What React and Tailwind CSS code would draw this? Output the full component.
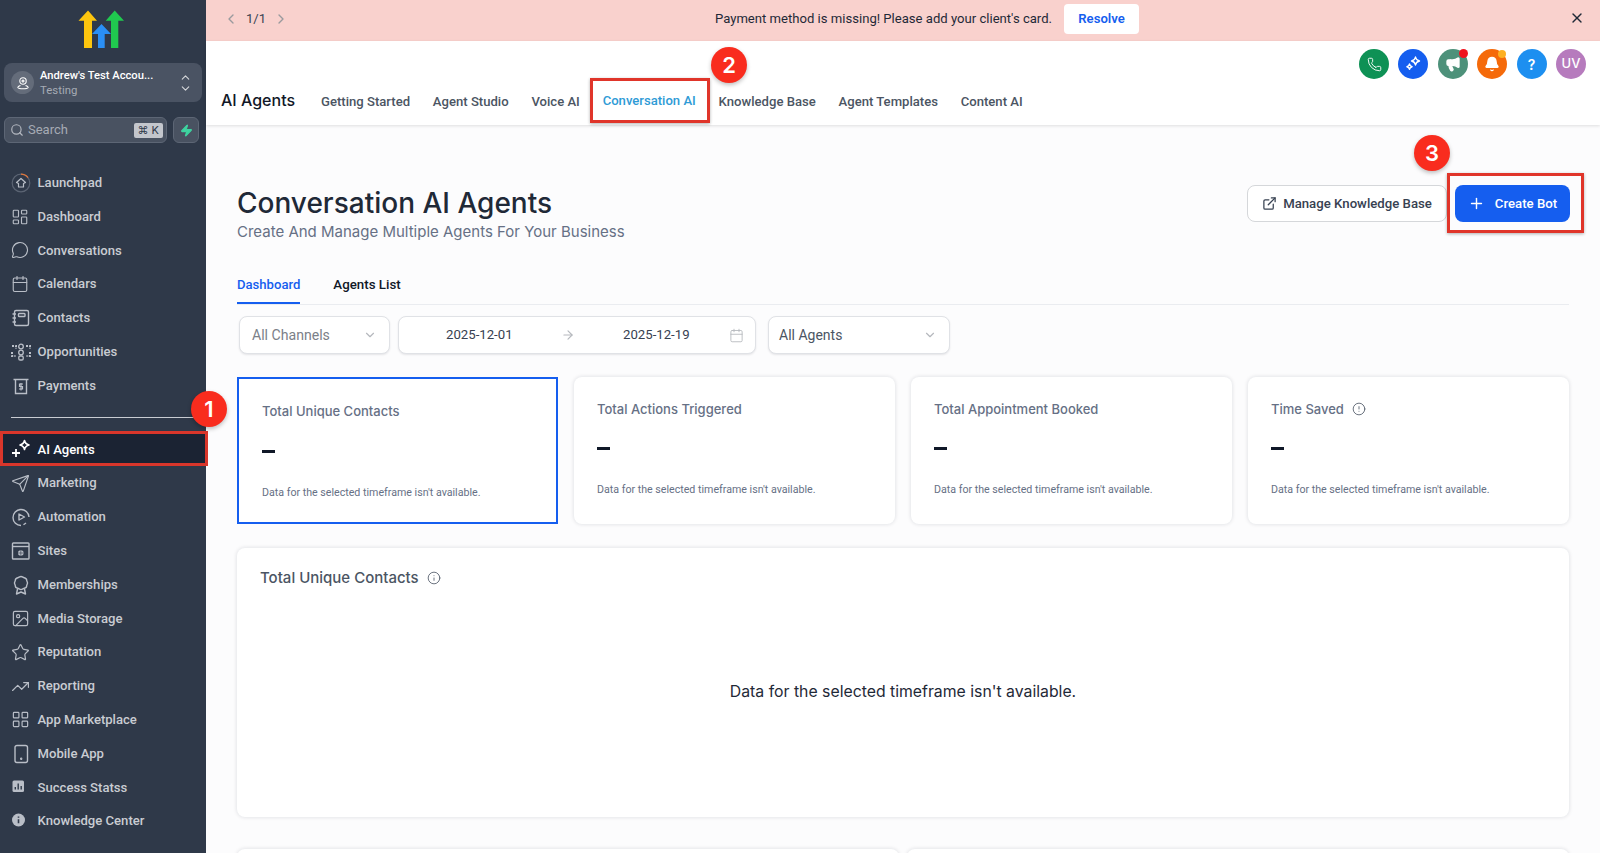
import React from "react";
import {
  Search, Zap, ChevronUp, ChevronDown, ChevronLeft, ChevronRight, X, LayoutDashboard, MessageCircle, Calendar,
  Send, Image, Star, TrendingUp, LayoutGrid, Phone, Megaphone, Bell, ExternalLink, Plus, ArrowRight,
  Info, CircleAlert,
} from "lucide-react";

const Launchpad = () => (
  <svg width="20" height="20" viewBox="0 0 20 20" fill="none" stroke="currentColor" strokeWidth="1.2">
    <circle cx="10" cy="10" r="8.8" stroke="#5b6473" />
    <path d="M10 1.2a8.8 8.8 0 0 1 7 3.5" stroke="#e0763a" />
    <path d="M10 5.5 14.500 9.500 12.500 10.500V14H7.500v-3.500L5.500 9.500z" strokeLinejoin="round" />
  </svg>
);

const Contacts = () => (
  <svg width="20" height="20" viewBox="0 0 20 20" fill="none" stroke="currentColor" strokeWidth="1.4">
    <rect x="3.500" y="2.500" width="14" height="15" rx="1.500" />
    <rect x="7.500" y="5.500" width="6.500" height="3" rx="0.800" />
    <path d="M1.500 6h3.500M1.500 10h3.500M1.500 14h3.500" />
  </svg>
);

const Opportunities = () => (
  <svg width="20" height="20" viewBox="0 0 20 20" fill="none" stroke="currentColor" strokeWidth="1.300">
    <circle cx="10" cy="4.500" r="2.300" />
    <circle cx="10" cy="10.500" r="2.300" />
    <rect x="7.800" y="14" width="4.400" height="4" rx="1.300" />
    <path d="M1 4h4v3M1 10v4h3.500M15 4h4v3M19 10v4h-3.500" strokeWidth="2" strokeDasharray="2 1.200" />
  </svg>
);

const Payments = () => (
  <svg width="20" height="20" viewBox="0 0 20 20" fill="none" stroke="currentColor" strokeWidth="1.400">
    <path d="M2.500 3.500h15M4.500 3.500v14h11v-14" />
    <path d="M12 8H8.500v2.500h3V13H8M10 7v7.500" strokeWidth="1.200" />
  </svg>
);

const AiAgents = () => (
  <svg width="20" height="20" viewBox="0 0 20 20" fill="none" stroke="#fff" strokeWidth="1.600">
    <path d="M13.500 1.500c.5 2.600 1.500 3.600 4.500 4.500-3 .9-4 1.900-4.500 4.500-.5-2.600-1.500-3.600-4.500-4.500 3-.9 4-1.900 4.500-4.500z" strokeLinejoin="round" />
    <path d="M5 10v8M1 14h8" strokeWidth="1.800" />
  </svg>
);

const Automation = () => (
  <svg width="20" height="20" viewBox="0 0 20 20" fill="none" stroke="currentColor" strokeWidth="1.400">
    <path d="M10 18.500a8 8 0 1 1 8-8.500" />
    <path d="M8 7 13.500 10 8 13z" strokeLinejoin="round" />
    <path d="M12.500 17.800 15 16" />
  </svg>
);

const Sites = () => (
  <svg width="20" height="20" viewBox="0 0 20 20" fill="none" stroke="currentColor" strokeWidth="1.400">
    <rect x="1.500" y="2" width="16.500" height="16" rx="0.800" />
    <path d="M1.500 5.500h16.500" />
    <circle cx="9.800" cy="12" r="2.800" fill="currentColor" stroke="none" />
    <path d="M7 12h5.600M9.800 9.200v5.600" strokeWidth="0.600" stroke="#2f3949" />
  </svg>
);

const Membership = () => (
  <svg width="20" height="20" viewBox="0 0 20 20" fill="none" stroke="currentColor" strokeWidth="1.400" strokeLinejoin="round">
    <path d="M10 1.500c1.500 0 2 1 3.200 1.200 1.400.3 2.500 1.100 2.500 2.600 0 1 .8 1.500.8 2.700s-.8 1.700-.8 2.700c0 1.500-1.100 2.300-2.500 2.600-1.200.2-1.700 1.200-3.200 1.200s-2-1-3.200-1.200c-1.400-.3-2.500-1.100-2.500-2.600 0-1-.8-1.500-.8-2.700s.8-1.700.8-2.700c0-1.500 1.100-2.300 2.500-2.600C8 2.500 8.500 1.500 10 1.500z" />
    <path d="M6.500 14 5.500 19 10 17l4.500 2-1-5" />
  </svg>
);

const Mobile = () => (
  <svg width="20" height="20" viewBox="0 0 20 20" fill="none" stroke="currentColor" strokeWidth="1.400">
    <rect x="4" y="1.500" width="12.500" height="17" rx="2" />
    <circle cx="10.200" cy="14.800" r="0.500" fill="currentColor" />
  </svg>
);

const Stats = () => (
  <svg width="20" height="20" viewBox="0 0 20 20">
    <rect x="1.500" y="3.500" width="11.500" height="11.500" rx="1.500" fill="#b9bec7" />
    <path d="M4.300 12.500V10M7.200 12.500V6.500M10.200 12.500V9" stroke="#2f3949" strokeWidth="1.400" />
  </svg>
);

const InfoFill = () => (
  <svg width="20" height="20" viewBox="0 0 20 20">
    <circle cx="7.500" cy="9" r="6.500" fill="#b9bec7" />
    <path d="M7.500 8.300v4M7.500 5.500v1.200" stroke="#2f3949" strokeWidth="1.600" />
  </svg>
);

const topNav = [
  ["Launchpad", <Launchpad />],
  ["Dashboard", <LayoutDashboard size={18} strokeWidth={1.5} />],
  ["Conversations", <MessageCircle size={18} strokeWidth={1.5} />],
  ["Calendars", <Calendar size={18} strokeWidth={1.5} />],
  ["Contacts", <Contacts />],
  ["Opportunities", <Opportunities />],
  ["Payments", <Payments />],
];

const bottomNav = [
  ["Marketing", <Send size={19} strokeWidth={1.5} />],
  ["Automation", <Automation />],
  ["Sites", <Sites />],
  ["Memberships", <Membership />],
  ["Media Storage", <Image size={19} strokeWidth={1.5} />],
  ["Reputation", <Star size={19} strokeWidth={1.5} />],
  ["Reporting", <TrendingUp size={19} strokeWidth={1.5} />],
  ["App Marketplace", <LayoutGrid size={19} strokeWidth={1.5} />],
  ["Mobile App", <Mobile />],
  ["Success Statss", <Stats />],
  ["Knowledge Center", <InfoFill />],
];

function NavItem({ label, icon }) {
  return (
    <div className="flex h-[33.8px] items-center pl-[11px] font-['Roboto',sans-serif] text-[13.100px] font-medium text-[#c9ccd2]">
      <span className="flex w-[26.5px] shrink-0 items-center text-[#b9bec7]">{icon}</span>
      {label}
    </div>
  );
}

function Sidebar() {
  return (
    <aside className="h-full w-[206px] shrink-0 bg-[#2f3949] pt-[10px]">
      <svg className="ml-[78px] block" width="46" height="38" viewBox="78 10 46 38">
        <path d="M88 10.500 97 20.700H92V48H84V20.700H78.500z" fill="#fdc50e" />
        <path d="M101.500 24 111 34H104.700V48H98V34H92z" fill="#2a8ff5" />
        <path d="M114.700 10.500 124 20.700H118.300V48H111V20.700H105.700z" fill="#20c94f" />
      </svg>
      <div className="mx-1 mt-[15px] flex h-[39px] items-center rounded-lg bg-[#4a5363] pl-[7px] pr-[10px] font-['Roboto',sans-serif]">
        <div className="flex h-[23px] w-[23px] items-center justify-center rounded-full bg-[#646c7a]">
          <svg width="14" height="14" viewBox="0 0 14 14" fill="none" stroke="#fff" strokeWidth="1.100">
            <circle cx="7" cy="5" r="3.200" />
            <circle cx="7" cy="5" r="1" />
            <path d="M4.500 9.500C2.500 10 1.500 11 2 11.800c.5.700 2.500 1 5 1s4.500-.3 5-1c.5-.8-.5-1.800-2.500-2.300" />
          </svg>
        </div>
        <div className="ml-[6px] min-w-0 flex-1 leading-[14px]">
          <div className="text-[11.200px] font-medium text-white">Andrew's Test Accou...</div>
          <div className="text-[11.400px] text-[#a6abb4]">Testing</div>
        </div>
        <div className="flex flex-col text-[#d5d7da]">
          <ChevronUp size={13} className="-mb-px" />
          <ChevronDown size={13} className="-mt-px" />
        </div>
      </div>
      <div className="mx-1 mt-[15px] flex gap-[6px]">
        <div className="flex h-[26px] w-[163px] items-center rounded-md border border-[#5d6675] bg-[#495261] pl-[5px] pr-[3px]">
          <Search size={14} className="text-[#b4b8c0]" />
          <span className="ml-[4px] flex-1 font-['Roboto',sans-serif] text-[13px] text-[#a6abb4]">Search</span>
          <span className="rounded-[2px] bg-[#c3c6cc] px-1 text-[11px] leading-[15px] text-[#2f3949]">⌘ K</span>
        </div>
        <div className="flex h-[26px] w-[26px] items-center justify-center rounded-md border border-[#5d6675] bg-[#495261]">
          <Zap size={13} className="fill-[#3ed4a0] text-[#3ed4a0]" />
        </div>
      </div>
      <nav className="mt-[23px]">
        {topNav.map(([label, icon]) => (
          <NavItem key={label} label={label} icon={icon} />
        ))}
        <div className="mx-[11px] mb-[15px] mt-[14px] border-t border-[#c9ccd2]" />
        <div className="flex h-[33.8px] items-center bg-[#1b2333] pl-[11px] font-['Roboto',sans-serif] text-[13.100px] font-medium text-white">
          <span className="flex w-[26.5px] shrink-0 items-center"><AiAgents /></span>
          AI Agents
        </div>
        {bottomNav.map(([label, icon]) => (
          <NavItem key={label} label={label} icon={icon} />
        ))}
      </nav>
    </aside>
  );
}

function Banner() {
  return (
    <div className="relative flex h-[41px] shrink-0 items-center justify-center bg-[#f9d1cd] pb-[3px] font-['Roboto',sans-serif] text-[13.100px] text-[#1f2937]">
      <div className="absolute left-[17px] flex items-center text-[#4b5563]">
        <ChevronLeft size={16} className="text-[#9a9a9e]" />
        <span className="ml-[7px] mr-[7px] text-[#374151]">1/1</span>
        <ChevronRight size={16} className="text-[#9a9a9e]" />
      </div>
      <span className="ml-[48px]">Payment method is missing! Please add your client's card.</span>
      <span className="ml-3 flex h-[30px] w-[75px] items-center justify-center rounded bg-white font-semibold text-[#155eef]">Resolve</span>
      <X size={16} className="absolute right-[15px] top-[10px] text-[#1f2937]" />
    </div>
  );
}

const tabs = ["Getting Started", "Agent Studio", "Voice AI", "Conversation AI", "Knowledge Base", "Agent Templates", "Content AI"];

const round = "flex h-[30px] w-[30px] items-center justify-center rounded-full text-white";

function Header() {
  return (
    <header className="relative flex h-[84px] shrink-0 items-end bg-white pb-[12px] pl-[15px] shadow-[0_1px_3px_rgba(0,0,0,0.12)]">
      <span className="font-['Inter',sans-serif] text-[16px] font-medium leading-[26px] text-[#111827]">AI Agents</span>
      <div className="ml-[26px] flex gap-[22.800px] font-['Roboto',sans-serif]">
        {tabs.map((t) => (
          <span key={t} className={t === "Conversation AI" ? "-translate-y-px text-[13.100px] font-medium leading-[22px] text-[#2f9bd6]" : "text-[13.100px] font-medium leading-[22px] text-[#4b5563]"}>
            {t}
          </span>
        ))}
      </div>
      <div className="absolute right-[14px] top-[8px] flex gap-[9.4px]">
        <div className={`${round} bg-[#0e9155]`}><Phone size={15} strokeWidth={1.5} /></div>
        <div className={`${round} bg-[#155eef]`}>
          <svg width="18" height="18" viewBox="0 0 18 18" fill="none" stroke="#fff" strokeWidth="1.400" strokeLinejoin="round">
            <path d="M11.500 2c.4 2.400 1.200 3.400 4 4-2.800.6-3.600 1.600-4 4-.4-2.400-1.200-3.400-4-4 2.800-.6 3.600-1.600 4-4z" />
            <path d="M5.500 9c.3 1.600.8 2.300 2.600 2.700-1.800.4-2.300 1.100-2.600 2.700-.3-1.600-.8-2.300-2.600-2.700C4.700 11.300 5.200 10.600 5.500 9z" />
          </svg>
        </div>
        <div className={`${round} relative bg-[#4d917a]`}>
          <Megaphone size={16} className="fill-white" />
          <span className="absolute right-0 top-0 h-[9px] w-[9px] rounded-full bg-[#f0141e]" />
        </div>
        <div className={`${round} relative bg-[#f56a0a]`}>
          <Bell size={16} className="fill-white" />
          <span className="absolute right-[1px] top-[1px] h-[8px] w-[8px] rounded-full bg-[#fdb022]" />
        </div>
        <div className={`${round} bg-[#1d8ff0] text-[14px] font-semibold`}>?</div>
        <div className={`${round} bg-[#b67bbd] text-[13px] font-medium`}>UV</div>
      </div>
    </header>
  );
}

function Select({ label, muted, width }) {
  return (
    <div className={`flex h-[38px] items-center justify-between rounded-lg border border-[#e0e2e6] bg-white pr-3 font-['Roboto',sans-serif] shadow-[0_1px_2px_rgba(16,24,40,0.1)] ${muted ? "pl-[12px]" : "pl-[10px]"} ${width}`}>
      <span className={muted ? "translate-y-px text-[14.100px] text-[#7b8088]" : "text-[14px] text-[#4b5563]"}>{label}</span>
      <ChevronDown size={14} className="text-[#b5b8bd]" />
    </div>
  );
}

function StatCard({ title, info, active }) {
  return (
    <div className={active
      ? "h-[147px] border-2 border-[#155eef] bg-white pl-[23px] pt-[22px]"
      : "h-[147px] rounded-lg bg-white pl-[23px] pt-[22px] shadow-[0_0_4px_rgba(16,24,40,0.14)]"}>
      <div className="flex items-center text-[13px] font-medium leading-5 text-[#667085]">
        {title}
        {info && <CircleAlert size={14} strokeWidth={1.4} className="ml-2 text-[#4b5563]" />}
      </div>
      <div className={active ? "mt-[22px] h-[3px] w-[13px] translate-y-[7px] bg-[#101828]" : "mt-[21px] h-[3px] w-[13px] translate-y-[7px] bg-[#101828]"} />
      <div className="mt-[39px] font-['Roboto',sans-serif] text-[10.650px] leading-4 text-[#667085]">Data for the selected timeframe isn't available.</div>
    </div>
  );
}

function Content() {
  return (
    <main className="flex-1 overflow-hidden bg-[#fcfcfd] pl-[31px] pr-[31px] pt-[60px]">
      <div className="flex items-start justify-between">
        <div>
          <h1 className="text-[28px] font-medium leading-9 text-[#1f2937]">Conversation AI Agents</h1>
          <p className="mt-px text-[15px] leading-5 text-[#667085]">Create And Manage Multiple Agents For Your Business</p>
        </div>
        <div className="-mr-px flex gap-2 font-['Roboto',sans-serif]">
          <div className="flex h-[37px] w-[200px] items-center justify-center rounded-lg border border-[#d5d7da] bg-white text-[13.200px] font-medium text-[#374151]">
            <ExternalLink size={15} className="mr-[6px]" />
            Manage Knowledge Base
          </div>
          <div className="flex h-[37px] w-[115px] items-center justify-center rounded-lg bg-[#155eef] text-[13.200px] font-medium text-white">
            <Plus size={17} className="mr-[10px]" />
            Create Bot
          </div>
        </div>
      </div>
      <div className="mt-[31px] flex gap-[33px] border-b border-[#eaecf0] font-['Roboto',sans-serif]">
        <span className="h-[31px] border-b-2 border-[#155eef] pt-[2px] text-[13.100px] font-medium leading-5 text-[#155eef]">Dashboard</span>
        <span className="pt-[2px] text-[13.300px] font-medium leading-5 text-[#101828]">Agents List</span>
      </div>
      <div className="ml-[2px] mt-[11px] flex">
        <Select label="All Channels" muted width="w-[151px]" />
        <div className="ml-2 flex h-[38px] w-[358px] items-center rounded-lg border border-[#e0e2e6] bg-white font-['Roboto',sans-serif] text-[13.200px] text-[#374151] shadow-[0_1px_2px_rgba(16,24,40,0.1)]">
          <span className="ml-[47px] w-[80px]">2025-12-01</span>
          <ArrowRight size={14} className="ml-[35px] text-[#b5b8bd]" />
          <span className="ml-[48px] w-[80px]">2025-12-19</span>
          <Calendar size={15} strokeWidth={1.4} className="ml-[26px] text-[#b5b8bd]" />
        </div>
        <Select label="All Agents" width="ml-3 w-[182px]" />
      </div>
      <div className="mt-[23px] grid grid-cols-4 gap-4">
        <StatCard title="Total Unique Contacts" active />
        <StatCard title="Total Actions Triggered" />
        <StatCard title="Total Appointment Booked" />
        <StatCard title="Time Saved" info />
      </div>
      <div className="mt-[24px] flex h-[269px] flex-col rounded-lg bg-white pl-[23px] pt-[20px] shadow-[0_0_4px_rgba(16,24,40,0.14)]">
        <div className="flex items-center text-[15px] font-medium leading-5 text-[#4b5563]">
          Total Unique Contacts
          <Info size={14} strokeWidth={1.4} className="ml-2" />
        </div>
        <div className="mt-[92px] pr-[23px] text-center text-[15.800px] text-[#1f2937]">Data for the selected timeframe isn't available.</div>
      </div>
      <div className="mt-[32px] grid grid-cols-2 gap-2">
        <div className="h-[60px] rounded-lg bg-white shadow-[0_0_4px_rgba(16,24,40,0.14)]" />
        <div className="h-[60px] rounded-lg bg-white shadow-[0_0_4px_rgba(16,24,40,0.14)]" />
      </div>
    </main>
  );
}

function Callout({ n, className }) {
  return (
    <div className={`absolute flex h-[36px] w-[36px] items-center justify-center rounded-full bg-[#f92c1e] text-[22px] font-semibold text-white shadow-[0_2px_4px_rgba(0,0,0,0.25)] ${className}`}>
      {n}
    </div>
  );
}

export default function App() {
  return (
    <div className="relative flex h-[853px] w-[1600px] overflow-hidden font-['Inter',sans-serif]">
      <Sidebar />
      <div className="flex min-w-0 flex-1 flex-col">
        <Banner />
        <Header />
        <Content />
      </div>
      <div className="absolute left-0 top-[431px] h-[35px] w-[208px] border-[3px] border-[#d9362b]" />
      <div className="absolute left-[590px] top-[78px] h-[45px] w-[120px] border-[3px] border-[#e0352a] shadow-[0_1px_3px_rgba(0,0,0,0.3)]" />
      <div className="absolute left-[1447px] top-[173px] h-[60px] w-[137px] border-[3px] border-[#e0352a] shadow-[0_1px_3px_rgba(0,0,0,0.3)]" />
      <Callout n="1" className="left-[191px] top-[391px]" />
      <Callout n="2" className="left-[711px] top-[47px]" />
      <Callout n="3" className="left-[1414px] top-[135px]" />
    </div>
  );
}
